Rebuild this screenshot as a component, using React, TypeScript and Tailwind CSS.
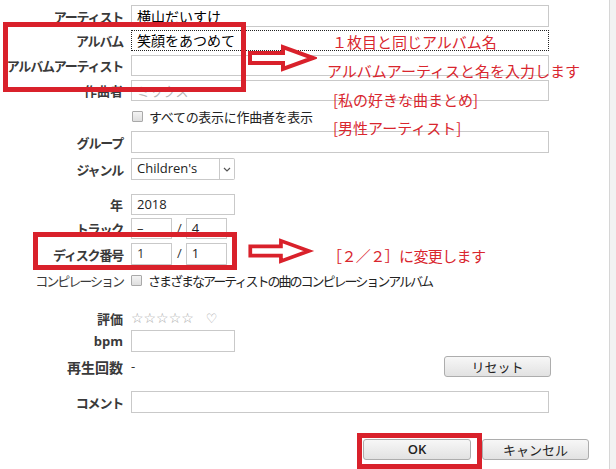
import React from "react"

const jp = "font-['Meiryo_UI','Noto_Sans_CJK_JP',sans-serif]"
const labelCls = `w-[123px] shrink-0 text-right text-[13px] font-bold text-[#3a3a3a] tracking-[-1.2px] leading-none ${jp}`
const inputCls = "h-full border border-[#c9c9c9] bg-white flex items-center px-[5px]"

function Arrow({ className }: { className: string }) {
  return (
    <svg className={className} viewBox="0 0 70 28" fill="none">
      <polygon
        points="3,9 36,9 36,3 66,14 36,25 36,19 3,19"
        fill="#fff"
        stroke="#d9212b"
        strokeWidth="4"
        strokeLinejoin="miter"
      />
    </svg>
  )
}

function Row({ label, mt, h, children, labelExtra = "" }: { label: string; mt: string; h: string; children?: React.ReactNode; labelExtra?: string }) {
  return (
    <div className={`flex items-center gap-[8px] ${mt} ${h}`}>
      <div className={`${labelCls} ${labelExtra}`}>{label}</div>
      {children}
    </div>
  )
}

function Checkbox() {
  return <span className="inline-block w-[11px] h-[11px] border border-[#a9a9a9] bg-gradient-to-b from-[#f4f4f4] to-[#dedede] rounded-[1px]" />
}

function Btn({ children, className }: { children: React.ReactNode; className: string }) {
  return (
    <button className={`flex items-center justify-center border border-[#adadad] rounded-[3px] bg-gradient-to-b from-[#f7f7f7] to-[#e2e2e2] text-[13px] text-[#222] ${jp} ${className}`}>
      {children}
    </button>
  )
}

function Pair({ a, b }: { a: string; b: string }) {
  return (
    <div className="h-full flex items-center">
      <div className={`${inputCls} w-[41px] text-[13px] text-[#333] font-['Open_Sans',sans-serif]`}>{a}</div>
      <span className="text-[13px] text-[#333] ml-[5px] mr-[4px] font-['Open_Sans',sans-serif]">/</span>
      <div className={`${inputCls} w-[41px] text-[13px] text-[#222] font-['Open_Sans',sans-serif]`}>{b}</div>
    </div>
  )
}

export default function App() {
  const red = `absolute text-[15px] text-[#d9262e] leading-none whitespace-nowrap ${jp}`
  return (
    <div className="w-[616px] h-[469px] bg-white flex overflow-hidden">
      <div className="relative flex-1 flex flex-col pt-[5px]">
        <Row label="アーティスト" mt="" h="h-[22px]">
          <div className={`${inputCls} w-[418px] text-[14px] text-black ${jp}`}>横山だいすけ</div>
        </Row>
        <Row label="アルバム" mt="mt-[3px]" h="h-[21px]">
          <div className={`h-full w-[418px] border border-dotted border-[#222] flex items-center px-[5px] text-[14px] text-black ${jp}`}>笑顔をあつめて</div>
        </Row>
        <Row label="アルバムアーティスト" mt="mt-[4px]" h="h-[21px]">
          <div className={`${inputCls} w-[418px]`} />
        </Row>
        <Row label="作曲者" mt="mt-[4px]" h="h-[21px]" labelExtra="tracking-[0px]">
          <div className={`${inputCls} w-[418px] text-[13px] text-[#b5b5b5] ${jp}`}>ミックス</div>
        </Row>
        <div className="flex items-center gap-[6px] mt-[8px] h-[14px] pl-[132px]">
          <Checkbox />
          <span className={`text-[13px] text-[#222] leading-none tracking-[-0.3px] ${jp}`}>すべての表示に作曲者を表示</span>
        </div>
        <Row label="グループ" mt="mt-[8px]" h="h-[22px]">
          <div className={`${inputCls} w-[418px]`} />
        </Row>
        <Row label="ジャンル" mt="mt-[5px]" h="h-[22px]">
          <div className="h-full w-[104px] flex">
            <div className="flex-1 border border-[#c9c9c9] flex items-center px-[5px] text-[13px] text-[#222] font-['Open_Sans',sans-serif]">Children's</div>
            <div className="w-[15px] border border-l-0 border-[#c9c9c9] rounded-r-[2px] flex items-center justify-center">
              <svg width="8" height="5" viewBox="0 0 8 5"><path d="M1 1l3 3 3-3" stroke="#555" strokeWidth="1.2" fill="none" /></svg>
            </div>
          </div>
        </Row>
        <Row label="年" mt="mt-[14px]" h="h-[21px]" labelExtra="tracking-[0px]">
          <div className={`${inputCls} w-[104px] text-[13px] text-[#222] font-['Open_Sans',sans-serif]`}>2018</div>
        </Row>
        <Row label="トラック" mt="mt-[3px]" h="h-[21px]">
          <Pair a="–" b="4" />
        </Row>
        <Row label="ディスク番号" mt="mt-[4px]" h="h-[22px]">
          <Pair a="1" b="1" />
        </Row>
        <div className="flex items-center gap-[8px] mt-[7px] h-[16px]">
          <div className={`${labelCls} font-normal tracking-[-2px]`}>コンピレーション</div>
          <div className="flex items-center gap-[6px]">
            <Checkbox />
            <span className={`text-[13px] text-[#222] leading-none tracking-[-2px] ${jp}`}>さまざまなアーティストの曲のコンピレーションアルバム</span>
          </div>
        </div>
        <Row label="評価" mt="mt-[22px]" h="h-[16px]" labelExtra="tracking-[0px]">
          <div className="flex items-center text-[14px] text-[#a8a8a8] leading-none font-['DejaVu_Sans',sans-serif]">
            <span className="tracking-[0px]">☆☆☆☆☆</span>
            <span className="ml-[12px] text-[13px]">♡</span>
          </div>
        </Row>
        <Row label="bpm" mt="mt-[4px]" h="h-[22px]" labelExtra="tracking-[0px] font-['Open_Sans',sans-serif]">
          <div className={`${inputCls} w-[104px]`} />
        </Row>
        <div className="flex items-center gap-[8px] mt-[4px] h-[21px] pr-[58px]">
          <div className={`${labelCls} text-[14px] tracking-[0px]`}>再生回数</div>
          <span className="text-[13px] text-[#333]">-</span>
          <Btn className="ml-auto w-[107px] h-[21px]">リセット</Btn>
        </div>
        <Row label="コメント" mt="mt-[14px]" h="h-[22px]">
          <div className={`${inputCls} w-[418px]`} />
        </Row>
        <div className="flex justify-end mt-[26px] pr-[20px] gap-[11px]">
          <Btn className="w-[108px] h-[21px] font-semibold font-['Open_Sans',sans-serif]">OK</Btn>
          <Btn className="w-[107px] h-[21px]">キャンセル</Btn>
        </div>

        {/* annotations */}
        <div className="absolute left-[3px] top-[22px] w-[243px] h-[70px] border-[5px] border-[#d9212b]" />
        <div className="absolute left-[33px] top-[232px] w-[204px] h-[38px] border-[5px] border-[#d9212b]" />
        <div className="absolute left-[357px] top-[433px] w-[125px] h-[36px] border-[5px] border-[#d9212b]" />
        <Arrow className="absolute left-[247px] top-[44px] w-[70px] h-[28px]" />
        <Arrow className="absolute left-[245px] top-[238px] w-[70px] h-[26px]" />
        <div className={`${red} left-[332px] top-[34px]`}>１枚目と同じアルバム名</div>
        <div className={`${red} left-[327px] top-[63px]`}>アルバムアーティスと名を入力します</div>
        <div className={`${red} left-[333px] top-[92px]`}>[私の好きな曲まとめ]</div>
        <div className={`${red} left-[333px] top-[120px]`}>[男性アーティスト]</div>
        <div className={`${red} left-[327px] top-[248px] tracking-[-0.6px]`}>［２／２］に変更します</div>
      </div>
      <div className="w-[7px] h-full bg-[#f2f2f2] border-l border-[#d6d6d6]" />
    </div>
  )
}
